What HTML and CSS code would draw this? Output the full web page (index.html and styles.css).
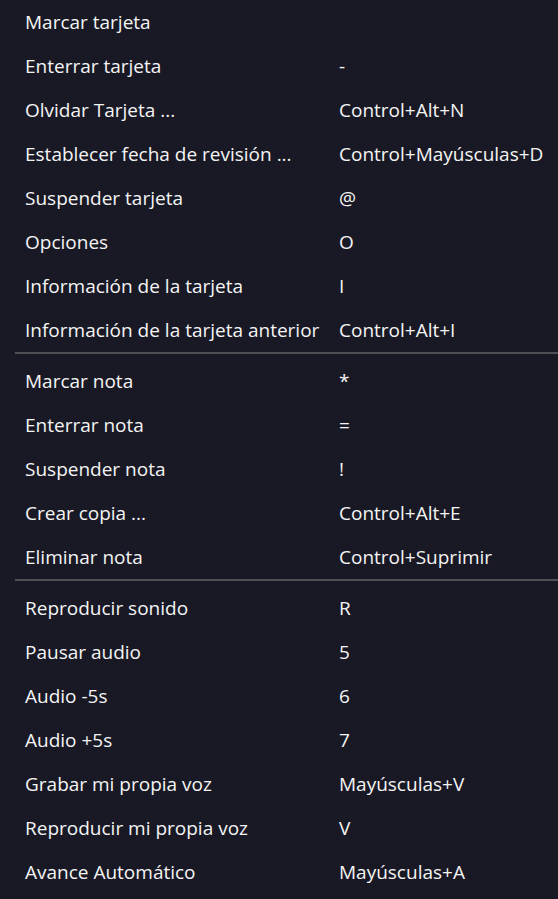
FILE: index.html
```html
<!DOCTYPE html>
<html lang="es">
<head>
<meta charset="utf-8">
<link rel="stylesheet" href="styles.css">
</head>
<body>
<div class="menu">
  <div class="group">
    <div class="row"><span class="label">Marcar tarjeta</span><span class="key"></span></div>
    <div class="row"><span class="label">Enterrar tarjeta</span><span class="key">-</span></div>
    <div class="row"><span class="label">Olvidar Tarjeta ...</span><span class="key">Control+Alt+N</span></div>
    <div class="row"><span class="label">Establecer fecha de revisión ...</span><span class="key">Control+Mayúsculas+D</span></div>
    <div class="row"><span class="label">Suspender tarjeta</span><span class="key">@</span></div>
    <div class="row"><span class="label">Opciones</span><span class="key">O</span></div>
    <div class="row"><span class="label">Información de la tarjeta</span><span class="key">I</span></div>
    <div class="row"><span class="label">Información de la tarjeta anterior</span><span class="key">Control+Alt+I</span></div>
  </div>
  <div class="sep"></div>
  <div class="group">
    <div class="row"><span class="label">Marcar nota</span><span class="key">*</span></div>
    <div class="row"><span class="label">Enterrar nota</span><span class="key">=</span></div>
    <div class="row"><span class="label">Suspender nota</span><span class="key">!</span></div>
    <div class="row"><span class="label">Crear copia ...</span><span class="key">Control+Alt+E</span></div>
    <div class="row"><span class="label">Eliminar nota</span><span class="key">Control+Suprimir</span></div>
  </div>
  <div class="sep"></div>
  <div class="group">
    <div class="row"><span class="label">Reproducir sonido</span><span class="key">R</span></div>
    <div class="row"><span class="label">Pausar audio</span><span class="key">5</span></div>
    <div class="row"><span class="label">Audio -5s</span><span class="key">6</span></div>
    <div class="row"><span class="label">Audio +5s</span><span class="key">7</span></div>
    <div class="row"><span class="label">Grabar mi propia voz</span><span class="key">Mayúsculas+V</span></div>
    <div class="row"><span class="label">Reproducir mi propia voz</span><span class="key">V</span></div>
    <div class="row"><span class="label">Avance Automático</span><span class="key">Mayúsculas+A</span></div>
  </div>
</div>
</body>
</html>
```

FILE: styles.css
```css
html, body {
  margin: 0;
  padding: 0;
  background: #191925;
}
.menu {
  width: 558px;
  height: 899px;
  overflow: hidden;
  background: #191925;
  color: #f4f4f4;
  font-family: "Open Sans", "Noto Sans", sans-serif;
  font-size: 19px;
  line-height: 26px;
}
.row {
  display: grid;
  grid-template-columns: 314px 1fr;
  align-items: center;
  height: 44px;
  padding-left: 25px;
  white-space: nowrap;
}
.sep {
  height: 2px;
  background: #4f4f55;
  margin: 0 0 5px 15px;
}
```
